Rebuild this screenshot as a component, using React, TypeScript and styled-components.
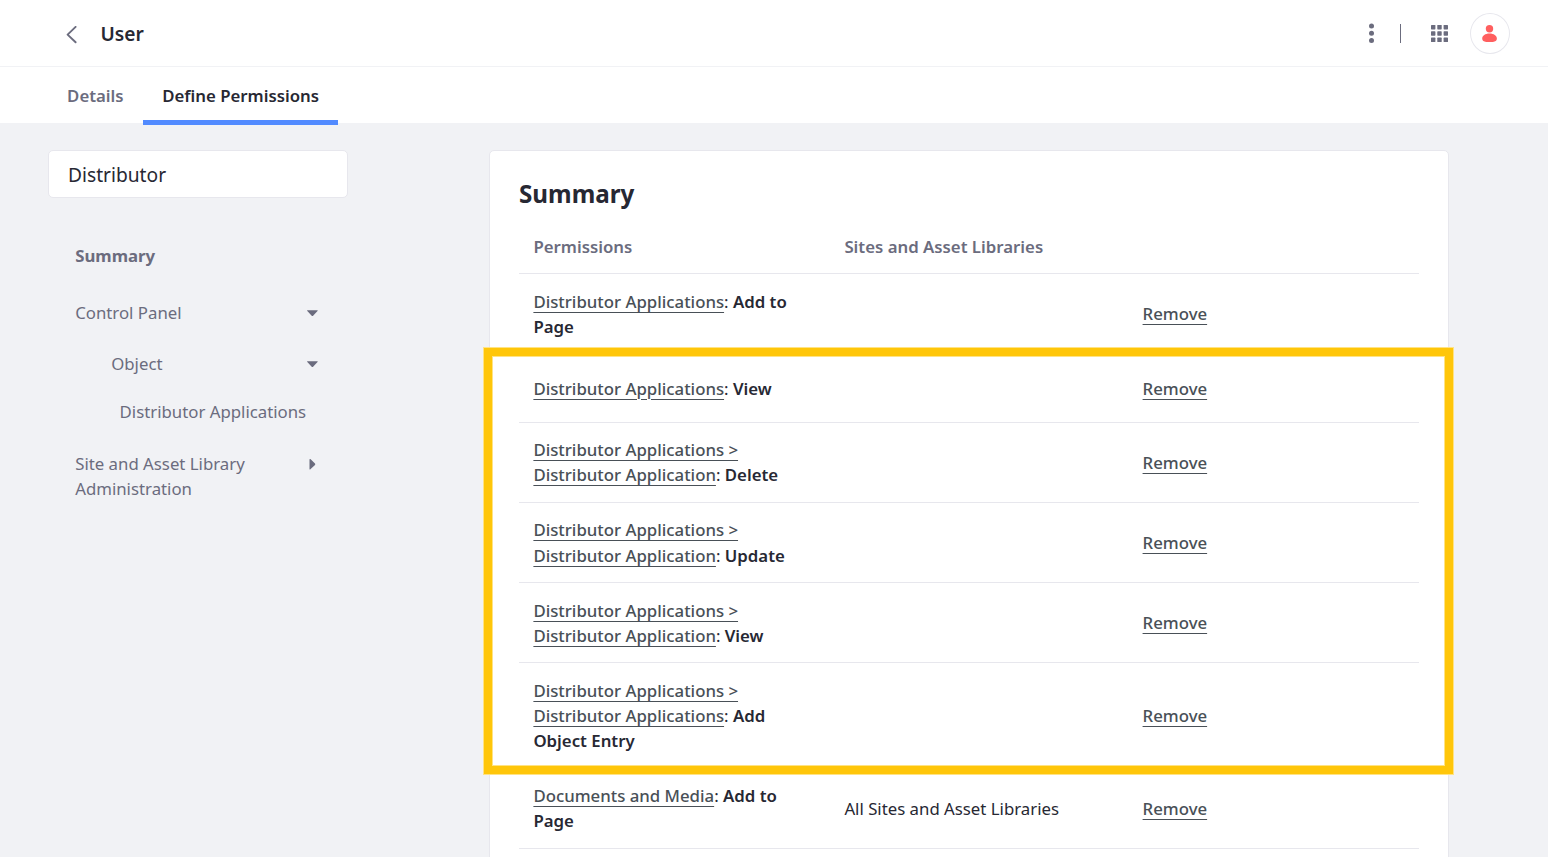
import React from "react";
import styled, { createGlobalStyle } from "styled-components";

const GlobalStyle = createGlobalStyle`
  *, *::before, *::after { box-sizing: border-box; }
  html, body { margin: 0; height: 100%; }
  body {
    background: #f1f2f5;
    color: #272833;
    font-family: "Noto Sans", "Open Sans", sans-serif;
    font-size: 16.8px;
    line-height: 25.2px;
    overflow: hidden;
  }
  h1, h2 { margin: 0; }
`;

const Page = styled.div`
  height: 857px;
  overflow: hidden;
`;

const Header = styled.header`
  display: flex;
  align-items: center;
  height: 67px;
  padding: 0 38px 0 66px;
  background: #fff;
  border-bottom: 1px solid #f1f2f5;
`;

const BackIcon = styled.svg`
  display: block;
  width: 12px;
  height: 18px;
  margin: 3px 22.4px 0 0;
`;

const Title = styled.h1`
  flex: 1;
  font-size: 19.2px;
  font-weight: 600;
  line-height: 28px;
  margin-top: 2px;
`;

const Actions = styled.div`
  display: flex;
  align-items: center;
`;

const DotsIcon = styled.svg`
  display: block;
  width: 5px;
  height: 20px;
`;

const Separator = styled.span`
  width: 1px;
  height: 19px;
  margin: 0 30px 0 26px;
  background: #6b6c7e;
`;

const GridIcon = styled.svg`
  display: block;
  width: 17px;
  height: 17px;
  margin-right: 22px;
`;

const Avatar = styled.span`
  display: flex;
  align-items: center;
  justify-content: center;
  width: 40px;
  height: 41px;
  border: 1px solid #e7e7ed;
  border-radius: 50%;

  svg { display: block; }
`;

const Tabs = styled.nav`
  display: flex;
  height: 56px;
  padding-left: 47.8px;
  background: #fff;
`;

const Tab = styled.a<{ $active?: boolean }>`
  height: 58px;
  padding: 16px 19.3px 0;
  font-weight: 600;
  color: ${(p) => (p.$active ? "#272833" : "#6b6c7e")};
  border-bottom: 5px solid ${(p) => (p.$active ? "#528bff" : "transparent")};
`;

const Content = styled.main`
  display: flex;
  align-items: flex-start;
  padding: 27px 99px 0 48px;
`;

const Sidebar = styled.aside`
  width: 300px;
  margin-right: 141px;
`;

const RoleName = styled.div`
  height: 48px;
  padding: 0 19px;
  background: #fff;
  border: 1px solid #e7e7ed;
  border-radius: 5px;
  font-size: 19.2px;
  line-height: 47px;
`;

const Menu = styled.div`
  display: flex;
  flex-direction: column;
  padding: 45px 29.6px 0 27.2px;
  color: #6b6c7e;
`;

const MenuItem = styled.a<{ $indent?: number; $gap?: number; $bold?: boolean }>`
  display: flex;
  justify-content: space-between;
  padding-left: ${(p) => p.$indent ?? 0}px;
  margin-bottom: ${(p) => p.$gap ?? 0}px;
  font-weight: ${(p) => (p.$bold ? 700 : 400)};
  white-space: nowrap;
`;

const Caret = styled.svg`
  display: block;
  flex: none;
  width: 12px;
  height: 12px;
  margin-top: 7px;
`;

const Card = styled.section`
  position: relative;
  flex: 1;
  height: 760px;
  padding: 25px 29px 0;
  background: #fff;
  border: 1px solid #e7e7ed;
  border-radius: 5px;
`;

const CardTitle = styled.h2`
  font-size: 24.2px;
  font-weight: 700;
  line-height: 36px;
`;

const Row = styled.div<{ $height: number }>`
  display: grid;
  grid-template-columns: 311px 298.2px 1fr;
  align-items: center;
  height: ${(p) => p.$height}px;
  border-bottom: 1px solid #e7e7ed;
`;

const HeadRow = styled(Row)`
  color: #6b6c7e;
  font-weight: 600;
`;

const Cell = styled.div<{ $shift?: number }>`
  padding: 0 14.4px;
  margin-top: ${(p) => p.$shift ?? 0}px;
`;

const Link = styled.a`
  color: #495057;
  font-weight: 500;
  text-decoration: underline;
  text-decoration-thickness: 1px;
  text-underline-offset: 4px;
`;

const Action = styled.span`
  font-weight: 600;
`;

const Highlight = styled.div`
  position: absolute;
  top: 197px;
  left: -6px;
  width: 969px;
  height: 426px;
  border: 8px solid #ffc60a;
  box-shadow: 0 0 0 1px #ffe384, inset 0 0 0 1px #ffe384;
  pointer-events: none;
`;

interface Permission {
  resource: string[];
  action: string;
  scope?: string;
  height: number;
}

const permissions: Permission[] = [
  { resource: ["Distributor Applications"], action: "Add to Page", height: 80.2 },
  { resource: ["Distributor Applications"], action: "View", height: 68.35 },
  { resource: ["Distributor Applications >", "Distributor Application"], action: "Delete", height: 80.2 },
  { resource: ["Distributor Applications >", "Distributor Application"], action: "Update", height: 80.2 },
  { resource: ["Distributor Applications >", "Distributor Application"], action: "View", height: 80.2 },
  { resource: ["Distributor Applications >", "Distributor Applications"], action: "Add Object Entry", height: 105.4 },
  { resource: ["Documents and Media"], action: "Add to Page", scope: "All Sites and Asset Libraries", height: 80.2 },
];

const CaretDown = () => (
  <Caret viewBox="0 0 12 12">
    <path d="M1.7 3.2h9.4c.6 0 .8.5.4.9L7.1 8.7c-.4.4-1 .4-1.4 0L1.300 4.1c-.4-.4-.2-.9.4-.9z" fill="#6b6c7e" />
  </Caret>
);

const CaretRight = () => (
  <Caret viewBox="0 0 12 12">
    <path d="M3.5 1.500v9.400c0 .6.5.8.9.4l4.600-4.400c.4-.4.4-1 0-1.400L4.400 1.100c-.4-.4-.9-.2-.9.4z" fill="#6b6c7e" />
  </Caret>
);

export default function App() {
  return (
    <Page>
      <GlobalStyle />
      <Header>
        <BackIcon viewBox="0 0 12 18">
          <path d="M9.6 0.9 1.6 8.6l8 7.7" fill="none" stroke="#6b6c7e" strokeWidth="1.9" strokeLinecap="round" strokeLinejoin="round" />
        </BackIcon>
        <Title>User</Title>
        <Actions>
          <DotsIcon viewBox="0 0 5 20" fill="#6b6c7e">
            {[3.1, 10.3, 17.5].map((y) => (
              <circle key={y} cx="2.5" cy={y} r="2.5" />
            ))}
          </DotsIcon>
          <Separator />
          <GridIcon viewBox="0 0 17 17" fill="#6b6c7e">
            {[0, 6.3, 12.6].map((y) =>
              [0, 6.3, 12.6].map((x) => <rect key={`${x}-${y}`} x={x} y={y} width="4.4" height="4.4" rx="0.6" />)
            )}
          </GridIcon>
          <Avatar>
            <svg width="16" height="17" viewBox="0 0 16 17" fill="#ff5f5f">
              <circle cx="7.5" cy="3.7" r="3.7" />
              <path d="M7.5 8.6c4.2 0 7.4 2.2 7.4 5 0 2.3-1.6 3.3-4 3.3H4.2c-2.4 0-4-1-4-3.3 0-2.8 3.1-5 7.3-5z" />
            </svg>
          </Avatar>
        </Actions>
      </Header>
      <Tabs>
        <Tab>Details</Tab>
        <Tab $active>Define Permissions</Tab>
      </Tabs>
      <Content>
        <Sidebar>
          <RoleName>Distributor</RoleName>
          <Menu>
            <MenuItem $bold $gap={31.8}>Summary</MenuItem>
            <MenuItem $gap={25.8}>Control Panel<CaretDown /></MenuItem>
            <MenuItem $indent={36} $gap={22.8}>Object<CaretDown /></MenuItem>
            <MenuItem $indent={44.4} $gap={26.8}>Distributor Applications</MenuItem>
            <MenuItem>
              <span>Site and Asset Library<br />Administration</span>
              <CaretRight />
            </MenuItem>
          </Menu>
        </Sidebar>
        <Card>
          <CardTitle>Summary</CardTitle>
          <HeadRow $height={62.25}>
            <Cell $shift={7.65}>Permissions</Cell>
            <Cell $shift={7.65}>Sites and Asset Libraries</Cell>
            <Cell />
          </HeadRow>
          {permissions.map((p, i) => (
            <Row key={i} $height={p.height}>
              <Cell>
                <Link>
                  {p.resource.map((part, n) => (
                    <React.Fragment key={n}>{n > 0 && <br />}{part}</React.Fragment>
                  ))}
                </Link>
                : <Action>{p.action}</Action>
              </Cell>
              <Cell>{p.scope}</Cell>
              <Cell><Link>Remove</Link></Cell>
            </Row>
          ))}
          <Highlight />
        </Card>
      </Content>
    </Page>
  );
}
